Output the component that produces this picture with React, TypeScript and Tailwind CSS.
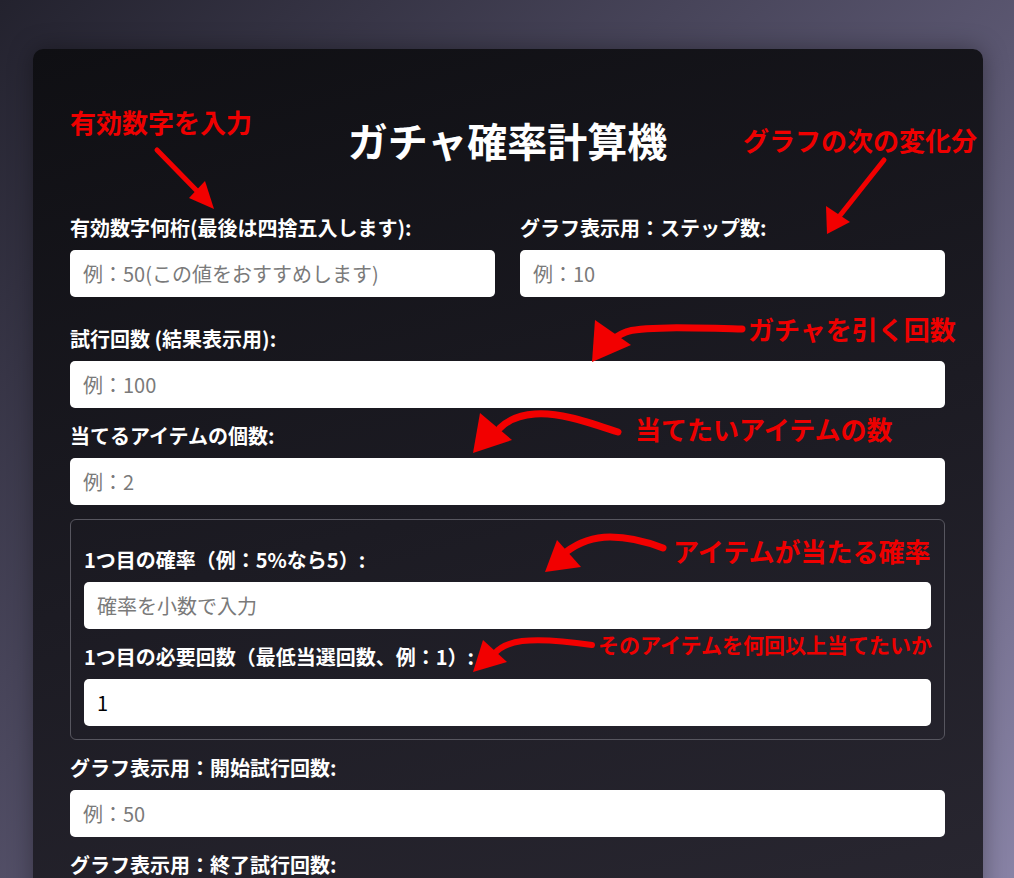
import React from "react";

const jp = { fontFamily: '"Noto Sans CJK JP", "Noto Sans", sans-serif' };

function Label({ children, className = "" }: { children: React.ReactNode; className?: string }) {
  return (
    <label className={`block text-[20px] leading-[24px] font-bold text-white mb-[10px] ${className}`}>
      {children}
    </label>
  );
}

function Input({ placeholder, value, className = "" }: { placeholder?: string; value?: string; className?: string }) {
  return (
    <input
      type="text"
      placeholder={placeholder}
      defaultValue={value}
      className={`block w-full h-[47px] rounded-[5px] bg-white px-[13px] text-[20px] text-black placeholder:text-[#7a7a7a] outline-none ${className}`}
      style={jp}
    />
  );
}

function Note({ children, className }: { children: React.ReactNode; className: string }) {
  return (
    <div className={`absolute leading-none font-bold text-[#ee0000] whitespace-nowrap ${className}`} style={jp}>
      {children}
    </div>
  );
}

export default function App() {
  return (
    <div
      className="relative min-h-screen w-full overflow-hidden bg-[linear-gradient(135deg,#23222e_0%,#5b5771_50%,#958fb4_100%)] pt-[49px] pb-[40px]"
      style={jp}
    >
      <div className="ml-[33px] w-[950px] rounded-[10px] bg-[linear-gradient(165deg,#0f0f13_0%,#1c1b23_45%,#282630_85%,#2c2a35_100%)] shadow-[0_0_24px_rgba(0,0,0,0.35)] pl-[37px] pr-[38px] pt-[67px] pb-[60px]">
        <h1 className="text-center text-[40px] leading-[48px] font-bold text-white mb-[52px]">ガチャ確率計算機</h1>

        <div className="grid grid-cols-2 gap-x-[25px] mb-[30px]">
          <div>
            <Label>有効数字何桁(最後は四捨五入します):</Label>
            <Input placeholder="例：50(この値をおすすめします)" />
          </div>
          <div>
            <Label>グラフ表示用：ステップ数:</Label>
            <Input placeholder="例：10" />
          </div>
        </div>

        <Label>試行回数 (結果表示用):</Label>
        <Input placeholder="例：100" className="mb-[16px]" />

        <Label>当てるアイテムの個数:</Label>
        <Input placeholder="例：2" className="mb-[14px]" />

        <div className="rounded-[6px] border border-[#57565f] px-[13px] pt-[28px] pb-[13px] mb-[16px]">
          <Label>1つ目の確率（例：5%なら5）:</Label>
          <Input placeholder="確率を小数で入力" className="mb-[16px]" />
          <Label>1つ目の必要回数（最低当選回数、例：1）:</Label>
          <Input value="1" />
        </div>

        <Label>グラフ表示用：開始試行回数:</Label>
        <Input placeholder="例：50" className="mb-[16px]" />

        <Label>グラフ表示用：終了試行回数:</Label>
        <Input placeholder="例：200" className="mb-[24px]" />

        <button className="block w-full h-[50px] rounded-[5px] bg-[#4f46e5] text-white text-[20px] font-bold">計算する</button>
      </div>

      {/* annotations */}
      <svg
        className="absolute left-0 top-0 pointer-events-none"
        width="1014"
        height="878"
        viewBox="0 0 1014 878"
      >
        <g fill="none" stroke="#f20000" strokeWidth="5" strokeLinecap="round">
          <path d="M157 150 L200 194" />
          <path d="M884 160 L838 218" />
          <path strokeWidth="7" d="M742 329 C700 328 640 326 626 332 C618 335 614 338 612 342" />
          <path strokeWidth="7" d="M618 432 C590 423 560 412 535 414 C520 415 508 420 500 428" />
          <path strokeWidth="7" d="M663 548 C645 541 630 537 610 537 C592 537 578 543 566 552" />
          <path strokeWidth="6" d="M592 645 C565 641 540 639 522 641 C508 643 500 647 494 654" />
        </g>
        <g fill="#f20000">
          <polygon points="214,209 189,198 205,181" />
          <polygon points="827,234 826,206 850,222" />
          <polygon points="592,362 595,320 631,345" />
          <polygon points="473,453 480,413 512,440" />
          <polygon points="545,572 557,540 581,567" />
          <polygon points="473,672 483,640 507,662" />
        </g>
      </svg>

      <Note className="left-[70px] top-[109px] text-[26px]">有効数字を入力</Note>
      <Note className="left-[743px] top-[127px] text-[26px]">グラフの次の変化分</Note>
      <Note className="left-[748px] top-[316px] text-[26px]">ガチャを引く回数</Note>
      <Note className="left-[635px] top-[416px] text-[26px]">当てたいアイテムの数</Note>
      <Note className="left-[673px] top-[538px] text-[26px]">アイテムが当たる確率</Note>
      <Note className="left-[598px] top-[634px] text-[21px]">そのアイテムを何回以上当てたいか</Note>
    </div>
  );
}
